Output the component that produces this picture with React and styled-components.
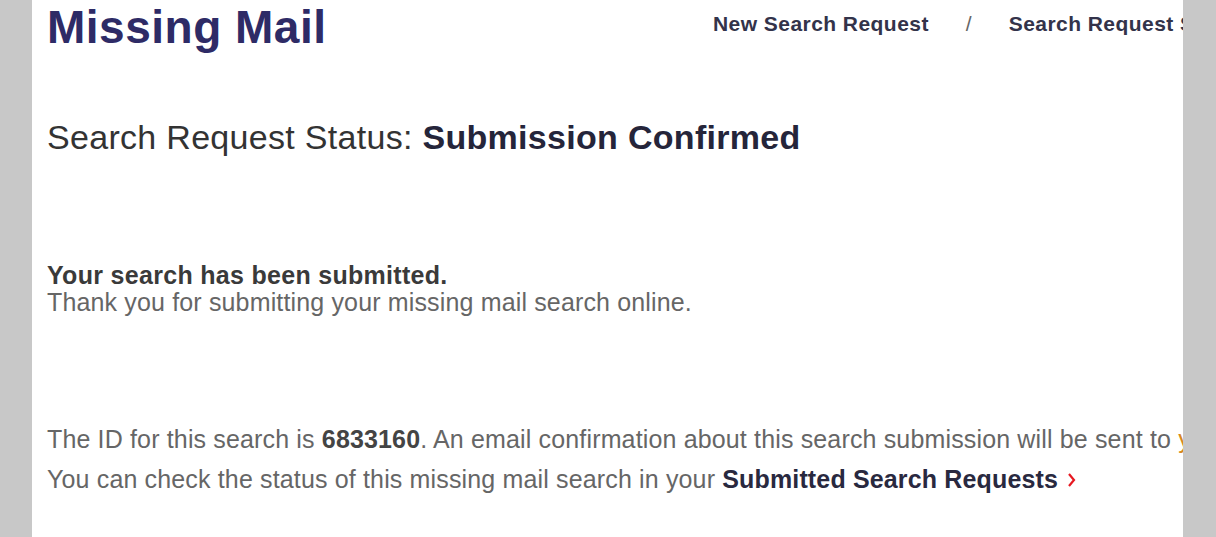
import React from "react"
import styled, { createGlobalStyle } from "styled-components"

const GlobalStyle = createGlobalStyle`
	html, body {
		margin: 0;
		padding: 0;
		background: #c8c8c8;
	}
	body {
		font-family: "Liberation Sans", Arial, sans-serif;
	}
`

const PageElement = styled.main`
	box-sizing: border-box;
	width: 1151px;
	min-height: 537px;
	margin-left: 32px;
	padding: 4px 0 0 15px;
	background: #ffffff;
	overflow: hidden;
	white-space: nowrap;
`

const HeaderElement = styled.header`
	display: grid;
	grid-template-columns: 666px max-content;
	align-items: start;
`

const TitleElement = styled.h1`
	margin: 0;
	font-size: 46px;
	line-height: 46px;
	font-weight: 700;
	letter-spacing: 0.5px;
	color: #2e2b66;
`

const NavElement = styled.nav`
	display: flex;
	align-items: baseline;
	gap: 37px;
	margin-top: 9px;
	font-size: 21px;
	line-height: 21px;
`

const NavLinkElement = styled.a`
	font-weight: 700;
	letter-spacing: 0.45px;
	color: #33334a;
	text-decoration: none;
`

const NavDividerElement = styled.span`
	color: #666666;
`

const StatusElement = styled.h2`
	margin: 67px 0 0;
	font-size: 34px;
	line-height: 40px;
	font-weight: 400;
	letter-spacing: 0.3px;
	color: #333333;

	strong {
		color: #25253a;
		font-weight: 700;
	}
`

const MessageElement = styled.p`
	margin: ${props => props.$gap}px 0 0;
	font-size: 25px;
	line-height: 27px;
	letter-spacing: 0.15px;
	color: #666666;
`

const LeadElement = styled.span`
	display: block;
	font-weight: 700;
	letter-spacing: 0.3px;
	color: #3a3a3a;
`

const NumberElement = styled.strong`
	color: #444444;
`

const EmailElement = styled.span`
	color: #d88a1c;
`

const SubmittedLinkElement = styled.a`
	display: inline-flex;
	align-items: center;
	gap: 9px;
	font-weight: 700;
	color: #29293f;
	text-decoration: none;
`

function Chevron() {
	return (
		<svg width="9" height="16" viewBox="0 0 9 16">
			<path d="M2 2 L7 8 L2 14" fill="none" stroke="#e71921" strokeWidth="2.2" />
		</svg>
	)
}

function App() {
	return (
		<>
			<GlobalStyle />
			<PageElement>
				<HeaderElement>
					<TitleElement>Missing Mail</TitleElement>
					<NavElement>
						<NavLinkElement href="#">New Search Request</NavLinkElement>
						<NavDividerElement>/</NavDividerElement>
						<NavLinkElement href="#">Search Request Status</NavLinkElement>
					</NavElement>
				</HeaderElement>

				<StatusElement>
					Search Request Status: <strong>Submission Confirmed</strong>
				</StatusElement>

				<MessageElement $gap={105}>
					<LeadElement>Your search has been submitted.</LeadElement>
					Thank you for submitting your missing mail search online.
				</MessageElement>

				<MessageElement $gap={110}>
					The ID for this search is <NumberElement>6833160</NumberElement>. An email confirmation about this search submission will be sent to <EmailElement>your email address</EmailElement>.
				</MessageElement>

				<MessageElement $gap={13}>
					You can check the status of this missing mail search in your{" "}
					<SubmittedLinkElement href="#">
						Submitted Search Requests
						<Chevron />
					</SubmittedLinkElement>
				</MessageElement>
			</PageElement>
		</>
	)
}

export default App
